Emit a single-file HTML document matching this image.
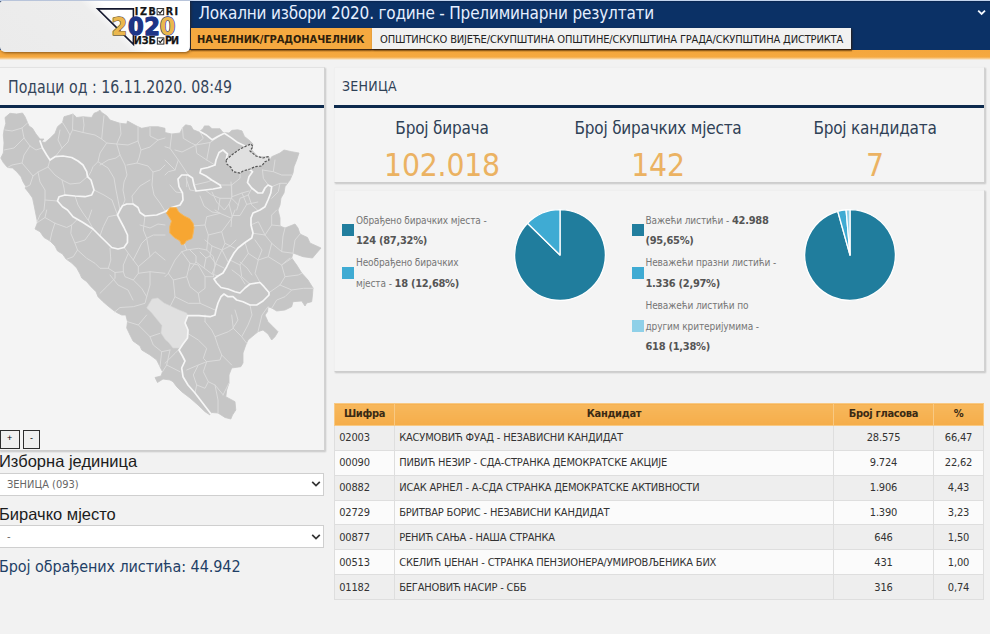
<!DOCTYPE html>
<html lang="sr">
<head>
<meta charset="utf-8">
<title>Локални избори 2020. године - Прелиминарни резултати</title>
<style>
*{box-sizing:border-box;margin:0;padding:0}
html,body{width:990px;height:634px;overflow:hidden;background:#f2f2f2}
body{position:relative;font-family:"DejaVu Sans Condensed","Liberation Sans",sans-serif;color:#333}
.abs{position:absolute}
.th{font-family:"DejaVu Sans Condensed","Liberation Sans",sans-serif}
.ar{font-family:"Liberation Sans",sans-serif}
/* header */
#hdr{left:0;top:0;width:990px;height:51px;background:#0b3166}
#hdrtop{left:0;top:0;width:990px;height:3px;background:linear-gradient(#c3d4ee 0,#c3d4ee 1px,#0a2652 1.2px,#0b3166 3px)}
#stripe{left:0;top:50px;width:990px;height:10px;background:linear-gradient(#f4a63c 0,#f5a940 70%,#f8d6a4 90%,#f2f2f2 100%)}
#logo{left:0;top:1px;width:190px;height:51px;border-radius:2px 0 5px 5px;background:linear-gradient(45deg,#ebebeb 0,#ededed 54%,#ffffff 63%);box-shadow:1px 1px 3px rgba(60,30,0,.6)}
#title{left:198.5px;top:2px;font-size:17px;line-height:22px;color:#e6efff;white-space:nowrap;letter-spacing:-.19px}
#tab1{left:191px;top:28px;width:181px;height:21px;box-shadow:0 1px 2px rgba(70,35,0,.75);background:#f5a940;color:#2e1f0c;font-weight:bold;font-size:11px;line-height:24px;padding-left:6px;white-space:nowrap;letter-spacing:-.09px}
#tab2{left:372px;top:28px;width:479px;height:21px;background:#f1f1f1;color:#222;font-size:11px;line-height:23px;padding-left:8px;white-space:nowrap;letter-spacing:-.14px;box-shadow:1px 1px 2px rgba(50,25,0,.8)}
/* panels */
.panel{background:#f4f4f4;border:1px solid #efefef;border-right-color:#d2d2d2;border-bottom-color:#cdcdcd;box-shadow:1px 1px 1.5px rgba(0,0,0,.18)}
.navy{background:#0d2a4d;height:3px}

/* logo */
#lgsvg{left:90px;top:0;width:100px;height:52px}
/* left */
#p1{left:-1px;top:67px;width:326px;height:384px;border-top-color:#e2e2e2}
#p1t{left:7.5px;top:76px;font-size:17px;line-height:22px;color:#34455a;white-space:nowrap;transform:scaleX(.925);transform-origin:0 0}
#p1n{left:0;top:105px;width:324px}
#map{left:0;top:108px;width:324px;height:320px}
.zb{top:429.8px;width:18px;height:19px;border:1.7px solid #2e2e2e;background:#f0f0f0;font-family:"Liberation Sans",sans-serif;font-size:9px;line-height:15px;text-align:center;color:#000}
.lab{left:-1px;font-family:"Liberation Sans",sans-serif;font-size:16.5px;line-height:20px;color:#1c1c1c;white-space:nowrap}
.sel{left:-1px;width:325px;height:23px;background:#fff;border:1px solid #cfcfcf;font-size:11px;line-height:21px;color:#666;padding-left:7px}
.chev{left:311px;width:10px;height:8px}
#cnt{left:-1px;top:555.8px;font-size:16px;line-height:22px;color:#1f3f66;white-space:nowrap;letter-spacing:-.08px}

/* right */
#p2{left:334px;top:67px;width:651px;height:116px}
#p2t{left:342px;top:75px;font-size:14px;line-height:22px;color:#2f4156;white-space:nowrap;letter-spacing:.25px}
#p2n{left:334px;top:105px;width:650px}
.st{top:117px;width:200px;text-align:center;font-size:17px;line-height:22px;color:#2f4156;white-space:nowrap;letter-spacing:-.2px}
.sv{top:146.2px;width:200px;text-align:center;font-size:31.5px;line-height:38px;color:#ebb262;white-space:nowrap;letter-spacing:-.2px}
#p3{left:334px;top:190px;width:651px;height:182px}
.sq{width:12px;height:12px}
.lg{font-size:10px;letter-spacing:-.1px;line-height:20.4px;color:#767676;white-space:nowrap}
.lg b{font-size:11px;color:#555;letter-spacing:-.28px}
.pie{width:94px;height:94px}
/* table */
#tbl{left:334px;top:403px;width:648.5px;border-collapse:collapse;font-size:11px;color:#333;table-layout:fixed}
#tbl th{height:22px;background:linear-gradient(#f7b85c,#f5ad4a);border:1px solid #f8c983;font-weight:bold;color:#3a2a14;text-align:center;padding:0 0 2px 0;letter-spacing:-.3px}
#tbl td{height:24.86px;border:1px solid #dedede;padding:0 0 0 4.2px;white-space:nowrap;letter-spacing:-.18px}
#tbl tr:nth-child(even) td{background:#eeeeee}
#tbl tr:nth-child(odd) td{background:#fbfbfb}
#tbl td.c{text-align:center;padding:0}
#tabsh{left:191px;top:49px;width:661px;height:3.2px;background:linear-gradient(rgba(80,42,8,.85),rgba(120,70,10,.35) 60%,rgba(160,100,20,0))}
</style>
</head>
<body>
<div id="hdr" class="abs"></div>
<div id="hdrtop" class="abs"></div>
<div id="stripe" class="abs"></div>
<div id="logo" class="abs"></div>
<div id="tabsh" class="abs"></div>
<svg class="abs" style="left:976px;top:8px;width:12px;height:10px" viewBox="0 0 12 10"><path d="M2.2 2.6 L5.6 6 L9 2.6" fill="none" stroke="#f4f8ff" stroke-width="1.8"/></svg>
<div id="title" class="abs">Локални избори 2020. године - Прелиминарни резултати</div>
<div id="tab1" class="abs">НАЧЕЛНИК/ГРАДОНАЧЕЛНИК</div>
<div id="tab2" class="abs">ОПШТИНСКО ВИЈЕЋЕ/СКУПШТИНА ОПШТИНЕ/СКУПШТИНА ГРАДА/СКУПШТИНА ДИСТРИКТА</div>

<svg id="lgsvg" class="abs" viewBox="90 0 100 52">
  <path d="M97.6 8.9 H133.4 V44.3 Z" fill="none" stroke="#14182e" stroke-width="1.6" stroke-linejoin="miter"/>
  <g font-family="DejaVu Sans Condensed, DejaVu Sans, sans-serif" font-weight="bold" font-size="25" stroke-width="1.3" paint-order="stroke" stroke-linejoin="round">
    <text x="111.6" y="34.7" fill="#ebb74d" stroke="#6a5a3a">2</text>
    <text x="128.1" y="34.7" fill="#1d3587" stroke="#1d3587">0</text>
    <text x="144.3" y="34.7" fill="#1d3587" stroke="#1d3587">2</text>
    <text x="159.8" y="34.7" fill="#ebb74d" stroke="#1d3587">0</text>
  </g>
  <g font-family="DejaVu Sans, sans-serif" font-weight="bold" font-size="9.6" fill="#151515" stroke="#151515" stroke-width=".25">
    <text x="134.8" y="15.1" textLength="21" lengthAdjust="spacing">IZB</text>
    <text x="165.8" y="15.1" textLength="12.2" lengthAdjust="spacing">RI</text>
    <text x="133.8" y="44.4" textLength="22" lengthAdjust="spacing">ИЗБ</text>
    <text x="165" y="44.4" textLength="14" lengthAdjust="spacing">РИ</text>
  </g>
  <g fill="none" stroke="#151515" stroke-width=".9">
    <rect x="157.1" y="8.6" width="6.6" height="6.2" fill="#fff"/>
    <path d="M158.4 11.4 L160 13.4 L162.8 9.6" stroke-width="1.1"/>
    <rect x="157.3" y="37.9" width="6.6" height="6.2" fill="#fff"/>
    <path d="M158.6 40.7 L160.2 42.7 L163 38.9" stroke-width="1.1"/>
  </g>
</svg>

<div id="p1" class="abs panel"></div>
<div id="p1t" class="abs">Подаци од : 16.11.2020. 08:49</div>
<div id="p1n" class="abs navy"></div>
<svg id="map" class="abs" viewBox="0 108 324 320">
<path d="M5 117.5 L10 113.3 L16.7 114 L22.5 113 L25 116.7 L27.5 122.5 L29 126 L32.5 128.3 L36 134 L40 139 L44 139 L41.7 141.7 L45 142.5 L50 138.3 L55 133.3 L57.5 126.7 L62.5 122.5 L64 116.7 L70 115 L73 114 L76.7 117.5 L83 116.7 L91.7 117.5 L94 113.3 L98 111.7 L99.7 110 L101.7 112.5 L106.7 115.8 L110 120 L120 123.3 L126.7 124 L127.5 121 L131.7 123.3 L138 126.7 L141.7 128.3 L150 126.7 L158 126.7 L165 128.3 L165 132.5 L171.7 134 L180 133 L182.5 128 L185.6 124.8 L191 125.9 L193.3 129.8 L199 132 L203 128.7 L204.4 125.9 L209 125.9 L212 128.7 L220 128.7 L223 132.5 L229 133 L232 130.3 L237.8 129.8 L242 130.9 L244.4 136.4 L250 140.9 L253 144 L251.7 150 L258 156.7 L269 156.7 L270 160 L271.7 156.7 L280 153 L284 150 L291.7 151.7 L299 153 L296.7 160 L294 166.7 L293 173 L290 180 L285 186.7 L284 193 L281 198 L280 205 L278 210 L280 218 L280 226 L285 228 L295 224 L298 228 L300 234 L307.5 237.5 L310 243 L321 248 L316.7 253 L312.5 258 L303 256.7 L293 253 L291.7 258 L296.7 265 L301.7 273 L308 280 L313 288 L312.5 295 L311.7 301.7 L306.7 303 L305 306 L301.7 301 L293 301.7 L291.7 306.7 L285 310 L276.7 311 L271.7 308 L268 306.7 L267.5 311.7 L265 315 L268 321.7 L273 326.7 L278 331.7 L275 336.7 L271.7 340 L268 334 L263 330 L258 331.7 L248 340 L245.8 345 L243 353 L243 363 L240.8 366.7 L231.7 368 L229 375 L229 383 L226.7 390 L225.8 396.7 L235 401.7 L235.8 410 L232.5 415 L230.8 419 L225 417.5 L218 413 L211.7 412.5 L210 415 L205 411.7 L198 405 L190 398 L181.7 391.7 L176.7 386.7 L173 381.7 L170 380 L163 379 L157.5 382.5 L155 377.5 L161 376 L162.5 371.7 L160 366.7 L156.7 360 L150 355 L141.7 350 L140 346 L133 341 L130 335 L126.7 328 L127.5 321.7 L125.8 315 L121.7 315 L116.7 312.5 L113 310 L108 306 L103 301.7 L98 296.7 L96 291.7 L91 286.7 L86.7 281.7 L81.7 278 L80 274 L76.7 268 L71.7 263 L66 259 L62.5 254 L57.5 251 L55 246 L50 241 L44 237.5 L40 231.7 L35 229 L37.5 222.5 L36 215 L35 210 L34 205 L32.5 198 L29 193 L25 188 L26 186.7 L23 181.7 L21 176.7 L16.7 171.7 L12.5 168 L7.5 167.5 L3.3 162.5 L0.8 158 L3.3 153 L4 143 L3.3 135 L4 130 L5.8 123.3 Z" fill="#c6c6c6" stroke="#c6c6c6" stroke-width="0.8" stroke-linejoin="round"/>
<!--THIN--><path d="M27.5 123.0 L22.0 128.0 L12.0 131.0 L5.0 130.0 M22.0 128.0 L24.0 138.0 L30.0 146.0 L36.0 150.0 L42.0 148.0 M24.0 138.0 L14.0 148.0 L4.0 150.0 M30.0 146.0 L24.0 155.0 L22.0 163.0 L28.0 170.0 L33.0 176.0 L38.0 172.0 L48.0 167.0 L50.0 160.0 M22.0 163.0 L12.0 165.0 L7.5 167.5 M33.0 176.0 L30.0 185.0 L26.0 187.0 M48.0 167.0 L55.0 175.0 L62.0 180.0 L70.0 184.0 L80.0 183.0 L87.0 177.0 M62.0 180.0 L64.0 188.0 L65.0 195.0 M38.0 172.0 L40.0 182.0 L45.0 190.0 L45.0 200.0 L44.0 210.0 L40.0 215.0 L37.0 222.0 M45.0 200.0 L57.5 201.0 M62.5 122.5 L66.0 128.0 L70.0 135.0 L68.0 142.0 L62.0 148.0 L55.0 157.0 M73.0 114.0 L72.5 130.0 L70.0 135.0 M73.0 130.0 L83.0 132.5 L95.0 135.0 L101.7 139.0 L106.7 143.0 L116.7 144.0 L128.0 145.0 L138.0 141.0 L138.0 126.7 M104.0 115.8 L103.0 125.0 L101.7 139.0 M106.7 143.0 L100.0 153.0 L98.0 161.7 L93.0 166.7 L91.0 171.7 L88.0 176.7 M116.7 144.0 L120.0 155.0 L125.0 165.0 L127.0 175.0 L124.0 182.0 L123.0 190.0 L125.0 200.0 L122.5 205.8 M127.0 165.0 L137.0 163.0 L148.0 166.0 L153.0 172.0 L152.0 185.0 L154.0 195.0 L160.0 203.0 L165.0 211.0 M138.0 141.0 L141.0 150.0 L139.0 158.0 L137.0 163.0 M141.0 150.0 L150.0 147.0 L158.0 140.0 L165.0 138.0 M153.0 172.0 L160.0 170.0 L165.0 165.0 M98.0 161.7 L108.0 168.0 L114.0 178.0 L116.0 190.0 L118.0 200.0 L120.0 210.0 M75.0 196.0 L78.0 205.0 L83.0 213.0 L88.0 220.0 M94.0 190.0 L104.0 195.0 L112.0 200.0 L117.5 215.0 M165.0 146.7 L170.0 148.3 L178.3 160.0 L175.0 170.0 L168.3 171.7 L165.0 175.0 M195.8 145.0 L196.7 153.3 L206.7 160.0 L215.0 165.0 M182.5 128.3 L183.3 138.3 L191.7 143.3 L195.8 145.0 L203.3 138.3 L200.8 133.3 M210.0 142.5 L215.0 139.2 L222.5 134.2 M210.0 142.5 L206.7 160.0 M195.8 145.0 L210.0 142.5 M231.7 185.0 L231.7 198.3 L238.3 205.0 M220.0 185.0 L231.7 185.0 L240.0 178.3 L240.0 173.3 M231.7 198.3 L220.0 198.3 L211.7 195.0 L205.0 190.0 M262.5 170.0 L263.3 178.3 L268.3 185.0 M262.5 170.0 L273.3 171.7 L281.7 175.0 L291.7 175.0 M273.3 171.7 L275.0 160.0 M271.7 186.7 L280.0 183.3 L286.7 183.3 M280.0 183.3 L278.3 191.7 L271.7 198.3 M251.7 188.3 L248.3 195.0 L240.0 198.3 L238.3 205.0 M248.3 195.0 L251.7 205.0 L257.5 210.0 M186.7 175.0 L186.7 186.7 M194.2 185.0 L208.3 181.7 L211.7 180.0 M170.0 148.3 L171.7 134.2 M178.3 160.0 L188.3 175.0 M165.0 160.0 L175.0 170.0 M220.0 198.3 L218.3 210.0 M238.3 205.0 L236.7 210.0 M37.5 222.5 L45.0 217.5 L55.0 223.3 L66.7 227.5 L71.7 225.0 L76.7 220.0 M71.7 225.0 L70.8 233.3 L75.0 243.3 L77.5 250.0 L73.3 256.7 L66.7 259.2 M77.5 250.0 L86.7 258.3 L95.0 263.3 L100.0 268.3 L108.3 268.3 L110.8 260.0 L110.0 248.3 M108.3 268.3 L115.0 272.5 L115.0 278.3 L106.7 286.7 L100.0 293.3 M115.0 272.5 L123.3 271.7 L125.0 276.7 L133.3 280.0 L141.7 288.3 L146.7 296.7 L145.0 303.3 L133.3 306.7 L120.0 307.5 L115.0 311.7 M123.3 271.7 L123.3 265.0 L128.3 253.3 L124.2 247.5 M128.3 253.3 L133.3 260.0 L138.3 266.7 L138.3 273.3 L133.3 280.0 M138.3 266.7 L150.0 256.7 L155.0 251.7 L165.0 260.0 M133.3 260.0 L141.7 243.3 L146.7 238.3 L143.3 230.0 L145.0 215.8 M146.7 238.3 L153.3 235.0 L165.0 235.0 M150.0 256.7 L146.7 238.3 M138.3 273.3 L150.0 271.7 L165.0 273.3 M150.0 271.7 L150.0 285.0 L146.7 296.7 M93.3 229.2 L88.3 220.0 L91.7 210.0 M100.0 235.8 L103.3 226.7 L108.3 216.7 L116.7 215.0 M45.0 217.5 L46.7 210.0 M184.2 243.3 L186.7 250.0 L181.7 251.7 L175.0 260.0 L168.3 273.3 L165.0 276.7 M186.7 250.0 L198.3 248.3 L206.7 250.0 L213.3 256.7 L215.0 265.0 L213.3 276.7 M194.2 225.8 L205.0 225.0 L206.7 216.7 L220.0 213.3 L231.7 218.3 L235.0 210.0 M205.0 225.0 L208.3 235.0 L206.7 250.0 M208.3 235.0 L221.7 231.7 L231.7 218.3 M221.7 231.7 L225.0 243.3 L235.0 248.3 M225.0 243.3 L215.0 265.0 M181.7 251.7 L190.0 263.3 L198.3 265.0 L205.0 276.7 L213.3 276.7 M190.0 263.3 L186.7 276.7 L190.0 286.7 L198.3 293.3 L205.0 288.3 L205.0 276.7 M186.7 276.7 L173.3 280.0 L168.3 273.3 M198.3 293.3 L200.0 303.3 L215.0 310.0 M173.3 280.0 L175.0 296.7 L170.0 306.7 L165.0 305.0 M253.3 233.3 L265.0 235.0 L271.7 243.3 L281.7 251.7 L293.3 253.3 M265.0 235.0 L271.7 225.0 L271.7 215.0 L276.7 210.0 M271.7 225.0 L280.0 225.8 M271.7 243.3 L268.3 256.7 L258.3 260.0 L255.0 273.3 L260.0 282.5 M268.3 256.7 L281.7 265.0 L285.0 276.7 L280.0 285.0 L269.2 292.5 M281.7 265.0 L291.7 258.3 M285.0 276.7 L298.3 275.0 L301.7 273.3 M280.0 285.0 L291.7 290.0 L303.3 288.3 L313.3 288.3 M291.7 290.0 L285.0 296.7 L276.7 300.0 L271.7 308.3 M245.0 242.5 L248.3 253.3 L240.0 265.0 L241.7 276.7 L250.0 284.2 M240.0 265.0 L230.0 260.0 M248.3 253.3 L258.3 260.0 M220.0 213.3 L215.0 210.0 M250.8 225.0 L258.3 221.7 L265.0 235.0 M175.0 296.7 L188.3 303.3 L200.0 303.3 M205.0 321.7 L211.7 330.0 L215.0 336.7 L218.3 346.7 L221.7 355.0 L220.0 360.0 L206.7 361.7 L198.3 365.0 L186.7 370.0 M215.0 336.7 L228.3 331.7 L233.3 328.3 L231.7 315.0 M233.3 328.3 L241.7 336.7 L246.7 343.3 M221.7 355.0 L231.7 365.0 M206.7 361.7 L203.3 371.7 L208.3 381.7 L215.0 385.0 L223.3 395.0 M198.3 365.0 L193.3 375.0 L196.7 385.0 L205.0 388.3 L208.3 381.7 M187.5 333.3 L198.3 340.0 L206.7 348.3 L203.3 358.3 L206.7 361.7 M165.0 363.3 L175.0 353.3 L180.0 348.3 M205.0 321.7 L205.0 315.0 M127.5 321.7 L138.3 325.0 L150.0 336.7 L153.3 345.0 L161.7 351.7 L170.0 350.0 M150.0 336.7 L160.0 333.3 M138.3 325.0 L146.7 315.0 M161.7 351.7 L160.0 366.7 M170.0 350.0 L166.7 365.0 L162.5 371.7 M166.7 365.0 L180.0 371.7 M205.0 240.0 L212.0 246.0 L222.0 250.0 L228.0 262.0 M212.0 246.0 L210.0 256.0 L216.0 264.0 L224.0 268.0 M200.0 252.0 L206.0 258.0 L210.0 256.0 M206.0 258.0 L204.0 268.0 L212.0 274.0 L218.0 276.0 M196.0 262.0 L204.0 268.0 M216.0 264.0 L212.0 274.0 M222.0 250.0 L230.0 246.0 L236.0 240.0 M190.0 250.0 L196.0 256.0 L196.0 262.0 L190.0 270.0 M240.0 262.0 L247.0 268.0 L252.0 275.0 M232.0 270.0 L240.0 276.0 L245.0 284.0 M255.0 240.0 L262.0 250.0 L258.0 260.0 M231.0 182.0 L232.0 196.7 L229.0 204.0 L232.0 215.5 L231.0 226.7 M212.0 192.0 L216.7 202.0 L224.4 210.0 L229.0 204.0 M232.0 196.7 L242.0 193.0 L249.0 191.0 M242.0 193.0 L246.7 204.4 L240.0 215.5 L232.0 215.5 M246.7 204.4 L257.8 202.0 M200.0 196.0 L204.0 206.0 L212.0 212.0 L220.0 213.0 M186.0 178.0 L190.0 190.0 L196.0 191.0 M150.0 180.0 L140.0 186.0 L132.0 196.0 L133.0 204.0 M100.0 165.0 L108.0 160.0 L116.0 158.0 L120.0 155.0 M60.0 130.0 L58.0 140.0 L62.0 148.0 M83.0 116.7 L84.0 125.0 L83.0 132.5 M150.0 126.7 L150.0 136.0 L158.0 140.0 M120.0 123.3 L121.0 134.0 L116.7 144.0 M175.0 150.0 L182.0 152.0 L190.0 148.0 L196.0 145.0 M170.0 185.0 L176.0 192.0 L182.5 193.0 M140.0 225.0 L150.0 228.0 L158.0 224.0 L165.0 225.0 M110.0 275.0 L118.0 285.0 L128.0 290.0 L133.0 300.0 M75.0 243.0 L85.0 240.0 L93.0 229.0 M55.0 223.0 L52.0 232.0 L50.0 241.0 M290.0 258.0 L285.0 262.0 L281.7 265.0 M285.0 228.0 L283.0 236.0 L281.7 251.7 M300.0 234.0 L295.0 240.0 L293.0 253.0 M235.0 310.0 L238.0 320.0 L233.0 328.0 M250.0 305.0 L252.0 315.0 L248.0 325.0 L241.7 336.7 M268.0 306.7 L262.0 315.0 L258.0 331.7 M196.7 385.0 L195.0 393.0 M215.0 385.0 L218.0 400.0 L218.0 413.0 M223.0 395.0 L229.0 383.0" fill="none" stroke="#dbdbdb" stroke-width="1" stroke-linejoin="round" stroke-linecap="round"/><!--/THIN--><!--/THIN-->
<path d="M152 299 L157.8 298 L164 303 L172 306.7 L179 310 L186.7 313 L187.8 315.6 L185 323 L188 330 L187.5 338 L183 344 L179 348 L173 348 L168 341.7 L165.6 340 L161 333 L162 325.6 L156.7 319 L151 312 L146.7 308 Z" fill="#e0e0e0" stroke="#d6d6d6" stroke-width="0.6"/>
<path d="M40 141 L42.5 148 L46.7 155 L50 160 L55 156.7 L63 156 L71.7 157.5 L78 161 L83 165 L86.7 171.7 L87.5 176.7 L91 180 L92.5 185 L94 190 L91.7 195 L85 196.7 L75 196 L65 195 L59 196.7 L57.5 201 L62.5 206.7 L67.5 210 L73 216.7 L83 222.5 L93 229 L100 236 L106.7 242.5 L111.7 247.5 L118 249 L124 247.5 L127.5 242.5 L127.5 235 L124 227.5 L120 220 L117.5 215 L120 210 L122.5 205.8 L126.7 204 L133 204 L138 207.5 L140 212.5 L145 216 L156.7 215 L165 211.7 L168 210 L171.7 207.5 L180 205 L183 200 L182.5 193 L179 186.7 L178 179 L181.7 175 L188 175 L192.5 178 L194 185 L196 191 L205 190 L213 189 L221 187.5 L220 185 L211.7 180 L206 176 L200 173 L201 169 L208 167.5 L215 165 L216 160 L219 152.5 L223 150 L227.5 154 L226 160 M200 131.5 L206.7 135.3 L212.2 139.8 L217.8 136.4 L224.4 133.3 L231 137.6 L237.8 142.6 L245 146 M249 169 L252.5 171.7 L249 176.7 L247.5 182.5 L251.7 188 L258 193 L262.5 193 L265 188 L268 185 L271.7 186.7 L270.8 193 L268 200 L265 206.7 L260 210 L253 213 L251 218 L251 225 L253 233 L251.7 238 L245 242.5 L238 248 L234 253 L230 260 L226.7 266.7 L223 273 L218 276 L214 279 L216.7 283 L221 287.5 L228 289 L235 291.7 L240 293 L245 288 L250 284 L260 282.5 L264 286.7 L269 292.5 L269 295 L263 301 L256.7 305 L250 305 L243 301.7 L236.7 300 L233 296.7 L228 296.7 L224 294 L221 296.7 L218 303 L216 310 L215 315 L210 316.7 L199 315.6 L187.8 315.6 L185 323 L188 330 L187.5 338 L183 344 L179 350 L182.5 356 L185 361 L181.7 368 L183 376.7 L188 385 L195 393 L201.7 401.7 L208 410 L211 414" fill="none" stroke="#f6f6f6" stroke-width="1.7" stroke-linejoin="round" stroke-linecap="round"/>
<path d="M226 160 L231.7 155 L240 149 L246.7 145.8 L251 144 L253 146.7 L250 151 L256 156 L263 158 L268 156.7 L269 160 L265 161.7 L261.7 166 L255 166.7 L250 169 L243 171 L240 173 L233 171.7 L231 167.5 L226.7 164 Z" fill="#e0e0e0" stroke="#555" stroke-width="1.2" stroke-dasharray="2.4 1.4"/>
<path d="M166.5 213.2 L169.8 207.7 L176.4 207.7 L178.6 212 L184.2 216 L189.7 218.7 L193 223 L194 227.5 L193 234 L191.9 238.6 L186.4 240.8 L184.2 244 L181.4 244.7 L179.8 240.8 L174.2 237.5 L169.8 233 L169.8 226.4 L171.5 221 L168.7 216.5 Z" fill="#f7a632" stroke="#f6b659" stroke-width="1" stroke-linejoin="round"/>
</svg>
<div class="abs zb" style="left:-.4px;width:20px">+</div>
<div class="abs zb" style="left:23.2px;width:16.4px">-</div>
<div class="abs lab" style="top:450.6px">Изборна јединица</div>
<div class="abs sel" style="top:472.6px">ЗЕНИЦА (093)</div>
<svg class="abs chev" style="top:480.4px" viewBox="0 0 10 8"><path d="M1.2 1.8 L5 5.6 L8.8 1.8" fill="none" stroke="#333" stroke-width="1.7"/></svg>
<div class="abs lab" style="top:503.5px">Бирачко мјесто</div>
<div class="abs sel" style="top:525.3px">-</div>
<svg class="abs chev" style="top:533px" viewBox="0 0 10 8"><path d="M1.2 1.8 L5 5.6 L8.8 1.8" fill="none" stroke="#333" stroke-width="1.7"/></svg>
<div id="cnt" class="abs">Број обрађених листића: 44.942</div>

<div id="p2" class="abs panel"></div>
<div id="p2t" class="abs">ЗЕНИЦА</div>
<div id="p2n" class="abs navy"></div>
<div class="abs st" style="left:342px">Број бирача</div>
<div class="abs sv" style="left:342px">102.018</div>
<div class="abs st" style="left:558px">Број бирачких мјеста</div>
<div class="abs sv" style="left:558px">142</div>
<div class="abs st" style="left:775px">Број кандидата</div>
<div class="abs sv" style="left:775px">7</div>

<div id="p3" class="abs panel"></div>
<div class="abs sq" style="left:342px;top:224px;background:#217e9e"></div>
<div class="abs lg" style="left:356px;top:211px">Обрађено бирачких мјеста -<br><b>124 (87,32%)</b></div>
<div class="abs sq" style="left:342px;top:266.5px;background:#3fabd3"></div>
<div class="abs lg" style="left:356px;top:253.4px">Необрађено бирачких<br>мјеста - <b>18 (12,68%)</b></div>
<svg class="abs pie" style="left:513px;top:208px" viewBox="0 0 94 94">
<path d="M47 47 L47.00 1.60 A45.4 45.4 0 1 1 14.54 15.26 Z" fill="#207d9d" stroke="#fff" stroke-width="1.3" stroke-linejoin="round"/>
<path d="M47 47 L14.54 15.26 A45.4 45.4 0 0 1 47.00 1.60 Z" fill="#3fabd3" stroke="#fff" stroke-width="1.3" stroke-linejoin="round"/>
</svg>
<div class="abs sq" style="left:631.5px;top:224px;background:#217e9e"></div>
<div class="abs lg" style="left:645.5px;top:210.6px">Важећи листићи - <b>42.988</b><br><b>(95,65%)</b></div>
<div class="abs sq" style="left:631.5px;top:266.5px;background:#3fabd3"></div>
<div class="abs lg" style="left:645.5px;top:253.4px">Неважећи празни листићи -<br><b>1.336 (2,97%)</b></div>
<div class="abs sq" style="left:631.5px;top:320px;background:#8fd0e8"></div>
<div class="abs lg" style="left:645.5px;top:296.3px">Неважећи листићи по<br>другим критеријумима -<br><b>618 (1,38%)</b></div>
<svg class="abs pie" style="left:803px;top:208px" viewBox="0 0 94 94">
<path d="M47 47 L47.00 1.60 A45.4 45.4 0 1 1 34.75 3.29 Z" fill="#207d9d" stroke="#fff" stroke-width="1.3" stroke-linejoin="round"/>
<path d="M47 47 L34.75 3.29 A45.4 45.4 0 0 1 43.07 1.77 Z" fill="#3fabd3" stroke="#fff" stroke-width="1.3" stroke-linejoin="round"/>
<path d="M47 47 L43.07 1.77 A45.4 45.4 0 0 1 47.00 1.60 Z" fill="#8fd0e8" stroke="#fff" stroke-width="1.3" stroke-linejoin="round"/>
</svg>

<table id="tbl" class="abs">
<colgroup><col style="width:60px"><col style="width:439px"><col style="width:100px"><col style="width:50px"></colgroup>
<tr><th>Шифра</th><th>Кандидат</th><th>Број гласова</th><th>%</th></tr>
<tr><td>02003</td><td>КАСУМОВИЋ ФУАД - НЕЗАВИСНИ КАНДИДАТ</td><td class="c">28.575</td><td class="c">66,47</td></tr>
<tr><td>00090</td><td>ПИВИЋ НЕЗИР - СДА-СТРАНКА ДЕМОКРАТСКЕ АКЦИЈЕ</td><td class="c">9.724</td><td class="c">22,62</td></tr>
<tr><td>00882</td><td>ИСАК АРНЕЛ - А-СДА СТРАНКА ДЕМОКРАТСКЕ АКТИВНОСТИ</td><td class="c">1.906</td><td class="c">4,43</td></tr>
<tr><td>02729</td><td>БРИТВАР БОРИС - НЕЗАВИСНИ КАНДИДАТ</td><td class="c">1.390</td><td class="c">3,23</td></tr>
<tr><td>00877</td><td>РЕНИЋ САЊА - НАША СТРАНКА</td><td class="c">646</td><td class="c">1,50</td></tr>
<tr><td>00513</td><td>СКЕЛИЋ ЏЕНАН - СТРАНКА ПЕНЗИОНЕРА/УМИРОВЉЕНИКА БИХ</td><td class="c">431</td><td class="c">1,00</td></tr>
<tr><td>01182</td><td>БЕГАНОВИЋ НАСИР - СББ</td><td class="c">316</td><td class="c">0,74</td></tr>
</table>
</body>
</html>
